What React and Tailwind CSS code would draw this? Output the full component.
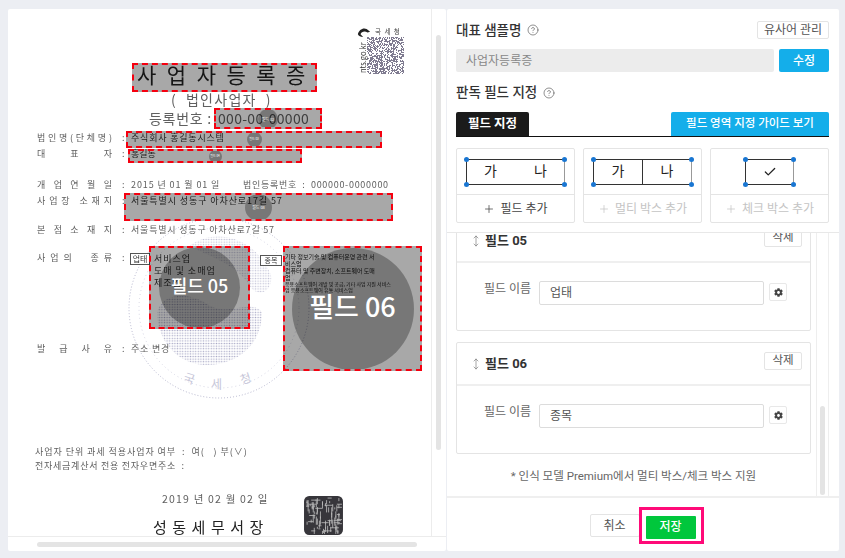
import React from "react";
import { CircleHelp, Plus, MoveVertical, Check } from "lucide-react";
import { FaCog } from "react-icons/fa";

const cjk = "font-['Roboto','Noto_Sans_CJK_KR',sans-serif]";

function Qr() {
  const cells = [];
  let s = 12345;
  for (let y = 0; y < 37; y++) {
    for (let x = 0; x < 37; x++) {
      s = (s * 1103515245 + 12345) & 0x7fffffff;
      if ((s >> 16) % 2 === 0) cells.push(<rect key={x + "-" + y} x={x} y={y} width="1" height="1" fill="#5f5a75" />);
    }
  }
  return (
    <svg viewBox="0 0 37 37" className="w-[37px] h-[37px] blur-[0.5px] opacity-80">
      {cells}
    </svg>
  );
}

function Seal() {
  return (
    <svg viewBox="0 0 200 190" className="absolute left-[111px] top-[211px] w-[200px] h-[190px] blur-[0.3px]">
      <defs>
        <pattern id="dots" width="2.6" height="2.6" patternUnits="userSpaceOnUse">
          <circle cx="1.3" cy="1.3" r="0.75" fill="#a9a9c6" />
        </pattern>
      </defs>
      <circle cx="100" cy="88" r="90" fill="none" stroke="#b4b4cc" strokeWidth="1" strokeDasharray="1 2" />
      <circle cx="100" cy="88" r="80" fill="none" stroke="#d4d4e2" strokeWidth="1" strokeDasharray="1 3" />
      <path d="M38 92 C44 72 70 72 88 84 C108 98 130 78 143 92 C143 125 118 145 88 145 C60 145 38 122 38 92 Z" fill="url(#dots)" />
      <path d="M70 26 C95 8 135 15 152 55 C154 70 142 78 132 68 C120 46 95 38 70 26 Z" fill="url(#dots)" opacity="0.7" />
    </svg>
  );
}

function Stamp() {
  const strokes = [];
  let s = 777;
  for (let i = 0; i < 90; i++) {
    s = (s * 1103515245 + 12345) & 0x7fffffff;
    const x = 3 + ((s >> 8) % 33);
    const y = 3 + ((s >> 14) % 33);
    const len = 2 + ((s >> 20) % 7);
    const v = (s >> 4) % 3 !== 0;
    strokes.push(<path key={i} d={v ? `M${x} ${y}v${Math.min(len, 38 - y)}` : `M${x} ${y}h${Math.min(len, 38 - x)}`} stroke="#bdbdbd" strokeWidth="0.8" />);
  }
  return (
    <svg viewBox="0 0 40 40" className="absolute left-[295px] top-[486px] w-[41px] h-[41px] blur-[0.4px]">
      <rect x="1" y="1" width="38" height="38" rx="5" fill="#37363b" />
      {strokes}
    </svg>
  );
}

function Label({ chars, className = "" }) {
  return (
    <div className={"w-[75px] mr-[10px] flex justify-between shrink-0 " + className}>
      {chars.map((c, i) => (
        <span key={i}>{c}</span>
      ))}
    </div>
  );
}

function Box({ className, circle, label, labelClass }) {
  return (
    <div className={"absolute border-2 border-dashed border-[#f5000f] bg-[rgba(0,0,0,0.34)] overflow-hidden flex items-center justify-center " + className}>
      {circle && (
        <div className={"shrink-0 rounded-full bg-[rgba(0,0,0,0.29)] flex items-center justify-center text-white whitespace-nowrap " + circle}>
          <span className={labelClass}>{label}</span>
        </div>
      )}
    </div>
  );
}

function Doc() {
  return (
    <div className="relative flex-1 overflow-hidden font-['Noto_Sans_CJK_KR','Noto_Sans',sans-serif]">
      <Seal />
      <div className="absolute left-[349px] top-[18px] w-[48px] blur-[0.4px]">
        <div className="flex items-center h-[10px]">
          <svg viewBox="0 0 16 12" className="w-[14px] h-[11px] shrink-0">
            <path d="M1 8C2 3 7 0 11 2l4 3-3 1C9 4 5 5 4 8l3 3C4 11 2 10 1 8Z" fill="#222" />
          </svg>
          <span className="ml-[4px] text-[6.5px] tracking-[1px] whitespace-nowrap text-[#444]">국 세 청</span>
        </div>
        <div className="flex">
          <span className="w-[10px] h-[37px] flex items-end justify-center">
            <span className="block -rotate-90 origin-center whitespace-nowrap text-[7.5px] leading-none text-[#333] translate-y-[-13px]">nts.go.kr</span>
          </span>
          <Qr />
        </div>
      </div>
      <span className="absolute left-[176px] top-[363px] rotate-[18deg] text-[12px] leading-none text-[#c6c6d8]">국</span>
      <span className="absolute left-[203px] top-[369px] text-[12px] leading-none text-[#c6c6d8]">세</span>
      <span className="absolute left-[232px] top-[363px] -rotate-[18deg] text-[12px] leading-none text-[#c6c6d8]">청</span>

      <div className="relative flex flex-col h-full pl-[29px] pt-[55px] text-[9px] leading-none text-[#606060] blur-[0.5px] whitespace-pre">
        <div className="ml-[100px] text-[21px] tracking-[10.5px] text-[#222]">사업자등록증</div>
        <div className="mt-[7px] ml-[134px] text-[14px] tracking-[1.3px]">(  법인사업자  )</div>
        <div className="mt-[5px] ml-[112px] flex text-[14px]">
          <span className="w-[69px] tracking-[0.7px]">등록번호 :</span>
          <span className="tracking-[0.3px]">000-00-00000</span>
        </div>

        <div className="mt-[8px] flex">
          <Label chars={["법", "인", "명", "(", "단", "체", "명", ")"]} />
          <span className="w-[9px]">:</span>
          <span className="tracking-[0.8px] text-[#333]">주식회사 홍길동시스템</span>
        </div>
        <div className="mt-[7px] flex">
          <Label chars={["대", "표", "자"]} />
          <span className="w-[9px]">:</span>
          <span className="text-[#333]">홍길동</span>
        </div>
        <div className="mt-[22px] flex">
          <Label chars={["개", "업", "연", "월", "일"]} />
          <span className="w-[9px]">:</span>
          <span className="w-[112px] tracking-[0.9px]">2015 년 01 월 01 일</span>
          <span className="tracking-[0.7px]">법인등록번호  :  000000-0000000</span>
        </div>
        <div className="mt-[7px] flex">
          <Label chars={["사", "업", "장", " ", "소", "재", "지"]} />
          <span className="w-[9px]">:</span>
          <span className="tracking-[0.9px] text-[#333]">서울특별시 성동구 아차산로17길 57</span>
        </div>
        <div className="mt-[20px] flex">
          <Label chars={["본", "점", "소", "재", "지"]} />
          <span className="w-[9px]">:</span>
          <span className="tracking-[0.8px]">서울특별시 성동구 아차산로7길 57</span>
        </div>
        <div className="mt-[19px] h-[42px] flex items-start">
          <Label chars={["사", "업", "의", " ", " ", "종", "류"]} />
          <span className="w-[8px]">:</span>
          <div className="w-[20px] border border-[#555] text-center text-[8px] leading-[10px] bg-white text-[#333]">업태</div>
          <div className="ml-[4px] w-[106px] text-[9px] leading-[12px] tracking-[1px] text-[#333]">{"서비스업\n도매 및 소매업\n제조업"}</div>
          <div className="mt-[2px] w-[22px] border border-[#555] text-center text-[7px] leading-[9px] bg-white text-[#333]">종목</div>
          <div className="ml-[3px] flex flex-col text-[#222]">
            <div className="text-[6px] leading-[7px]">{"기타 정보기술 및 컴퓨터운영 관련 서\n비스업\n컴퓨터 및 주변장치, 소프트웨어 도매\n업"}</div>
            <div className="text-[5px] leading-[5.5px]">{"응용소프트웨어 개발 및 공급, 기타 사업 지원 서비스\n업 응용소프트웨어 유통 서비스업"}</div>
          </div>
        </div>
        <div className="mt-[49px] flex">
          <Label chars={["발", "급", "사", "유"]} />
          <span className="w-[9px]">:</span>
          <span className="tracking-[0.8px]">주소 변경</span>
        </div>
        <div className="mt-[94px] -ml-[2px] tracking-[0.95px]">사업자 단위 과세 적용사업자 여부  :  여(   ) 부(∨)</div>
        <div className="mt-[5px] -ml-[2px] tracking-[0.75px]">전자세금계산서 전용 전자우면주소  :</div>
        <div className="mt-[24px] ml-[125px] text-[10.5px] tracking-[1.2px]">2019 년 02 월 02 일</div>
        <div className="mt-[14px] ml-[116px] text-[15px] tracking-[5.5px] text-[#222]">성동세무서장</div>
      </div>
      <Stamp />

      <div className="absolute -left-2 -top-[9px] w-[440px] h-[540px]">
        <Box className="left-[132px] top-[63px] w-[185px] h-[29px]" />
        <Box className="left-[214px] top-[108px] w-[108px] h-[21px]" circle="w-[20px] h-[20px] text-[4px]" label="필드 02" />
        <Box className="left-[126px] top-[131px] w-[256px] h-[17px]" circle="w-[15px] h-[15px] text-[3px]" label="필드 03" />
        <Box className="left-[128px] top-[149px] w-[174px] h-[14px]" circle="w-[13px] h-[13px] text-[3px]" label="필드 04" />
        <Box className="left-[124px] top-[193px] w-[269px] h-[28px]" circle="w-[27px] h-[27px] text-[4px]" label="필드 08" />
        <Box className="left-[149px] top-[246px] w-[101px] h-[83px]" circle="w-[81px] h-[81px] text-[18px] font-medium" label="필드 05" labelClass="-mt-[5px]" />
        <Box className="left-[283px] top-[246px] w-[139px] h-[125px]" circle="w-[122px] h-[122px] text-[27px] font-medium" label="필드 06" labelClass="-mt-[4px]" />
      </div>
    </div>
  );
}

function AddCard({ children, label, disabled }) {
  return (
    <div className="flex-1 h-[75px] border border-[#e4e4e4] rounded-[2px] flex flex-col">
      <div className="h-[46px] flex items-center justify-center border-b border-[#e4e4e4]">{children}</div>
      <div className={"flex-1 flex items-center justify-center gap-[5px] text-[12px] " + (disabled ? "text-[#c4c4c4]" : "text-[#444]")}>
        <Plus size={12} strokeWidth={1.5} />
        <span>{label}</span>
      </div>
    </div>
  );
}

function Sample({ w, children }) {
  const h = (c) => <span className={"absolute w-[5px] h-[5px] rounded-full bg-[#1976d2] " + c} />;
  return (
    <div className={"relative h-[26px] border border-[#333] border-r-[#999] flex items-center text-[14px] text-[#222] " + w}>
      {h("-left-[3px] -top-[3px]")}
      {h("-right-[3px] -top-[3px]")}
      {h("-left-[3px] -bottom-[3px]")}
      {h("-right-[3px] -bottom-[3px]")}
      {children}
    </div>
  );
}

function FieldCard({ title, value, className }) {
  return (
    <div className={"h-[112px] shrink-0 border border-[#e4e4e4] rounded-[2px] flex flex-col " + className}>
      <div className="h-[43px] shrink-0 border-b-2 border-[#efefef] pl-[13px] pr-[8px] flex items-center">
        <MoveVertical size={12} strokeWidth={1.3} className="text-[#777]" />
        <span className="ml-[3px] text-[13px] font-bold text-[#333]">{title}</span>
        <button className="ml-auto self-start mt-[9px] w-[38px] h-[18px] border border-[#e4e4e4] rounded-[2px] text-[11.5px] text-[#555] leading-none">삭제</button>
      </div>
      <div className="flex pl-[27px] pt-[18px] pr-[23px] items-start">
        <span className="w-[55px] text-[12px] leading-[16px] text-[#666]">필드 이름</span>
        <div className="flex-1 h-[24px] border border-[#dcdcdc] rounded-[2px] flex items-center pl-[10px] text-[12px] text-[#555]">{value}</div>
        <div className="ml-[5px] mt-[2px] w-[18px] h-[18px] border border-[#e8e8e8] rounded-[2px] flex items-center justify-center">
          <FaCog size={9} className="text-[#444]" />
        </div>
      </div>
    </div>
  );
}

export default function App() {
  return (
    <div className={"w-[845px] h-[558px] bg-[#eceef3] pt-[9px] pb-[7px] pl-[8px] pr-[6px] flex gap-px overflow-hidden " + cjk}>
      <div className="w-[438px] bg-white flex flex-col rounded-[2px]">
        <div className="flex-1 min-h-0 flex">
          <Doc />
          <div className="w-[15px] shrink-0 border-l border-[#ececec] pt-[26px] pl-[4px]">
            <div className="w-[5px] h-[415px] bg-[#e4e4e4] rounded-full" />
          </div>
        </div>
        <div className="h-[15px] shrink-0 border-t border-[#ececec] pl-[29px] pt-[5px]">
          <div className="w-[380px] h-[5px] bg-[#e4e4e4] rounded-full" />
        </div>
      </div>

      <div className="w-[392px] bg-white rounded-[2px] flex flex-col">
        <div className="h-[224px] shrink-0 pl-[9px] pr-[10px] pt-[12px] border-b border-[#e8e8e8]">
          <div className="h-[18px] flex items-center">
            <span className="text-[13.5px] font-medium text-[#333]">대표 샘플명</span>
            <CircleHelp size={12} strokeWidth={1.3} className="ml-[6px] text-[#555]" />
            <button className="ml-auto w-[72px] h-[18px] border border-[#e4e4e4] rounded-[2px] text-[12px] leading-none text-[#555]">유사어 관리</button>
          </div>
          <div className="mt-[10px] flex gap-[5px]">
            <div className="flex-1 h-[23px] bg-[#ececec] rounded-[2px] flex items-center pl-[10px] text-[12px] text-[#888]">사업자등록증</div>
            <button className="w-[50px] h-[23px] bg-[#14aeea] rounded-[2px] text-white text-[12px] font-medium">수정</button>
          </div>
          <div className="mt-[12px] h-[17px] flex items-center">
            <span className="text-[13.5px] font-medium text-[#333]">판독 필드 지정</span>
            <CircleHelp size={12} strokeWidth={1.3} className="ml-[6px] text-[#555]" />
          </div>
          <div className="mt-[11px] h-[25px] border-b border-[#111] flex justify-between">
            <div className="w-[73px] bg-[#1b1b1b] rounded-t-[2px] flex items-center justify-center text-white text-[12.5px] font-bold">필드 지정</div>
            <div className="w-[158px] bg-[#14aeea] rounded-t-[2px] flex items-center justify-center text-white text-[11.5px] font-medium">필드 영역 지정 가이드 보기</div>
          </div>
          <div className="mt-[11px] flex gap-[8px]">
            <AddCard label="필드 추가">
              <Sample w="w-[99px] justify-between px-[17px]"><span>가</span><span>나</span></Sample>
            </AddCard>
            <AddCard label="멀티 박스 추가" disabled>
              <Sample w="w-[99px]">
                <span className="flex-1 h-full border-r border-[#333] flex items-center justify-center">가</span>
                <span className="flex-1 flex items-center justify-center">나</span>
              </Sample>
            </AddCard>
            <AddCard label="체크 박스 추가" disabled>
              <Sample w="w-[49px] justify-center"><Check size={14} strokeWidth={2.2} className="text-[#222]" /></Sample>
            </AddCard>
          </div>
        </div>

        <div className="h-[265px] shrink-0 flex pl-[9px] pr-[10px] border-b-2 border-[#efefef] overflow-hidden">
          <div className="w-[355px] flex flex-col items-stretch">
            <FieldCard className="-mt-[14px]" title="필드 05" value="업태" />
            <FieldCard className="mt-[11px]" title="필드 06" value="종목" />
            <p className="mt-[15px] text-center text-[11.5px] leading-[14px] text-[#666]">* 인식 모델 Premium에서 멀티 박스/체크 박스 지원</p>
          </div>
          <div className="ml-[5px] w-[13px] border-x border-[#eeeeee] pt-[173px] pl-[3px]">
            <div className="w-[5px] h-[89px] bg-[#e4e4e4] rounded-full" />
          </div>
        </div>

        <div className="flex-1 flex justify-center pt-[16px] pr-[1px]">
          <button className="w-[50px] h-[23px] border border-[#e4e4e4] rounded-[2px] text-[12px] text-[#555] -mr-[1px]">취소</button>
          <div className="relative">
            <button className="ml-[7px] w-[50px] h-[23px] bg-[#00c73c] rounded-[1px] text-white text-[12px] font-medium">저장</button>
            <div className="absolute left-0 -top-[7px] w-[65px] h-[37px] border-[3px] border-[#ff0a78]" />
          </div>
        </div>
      </div>
    </div>
  );
}
